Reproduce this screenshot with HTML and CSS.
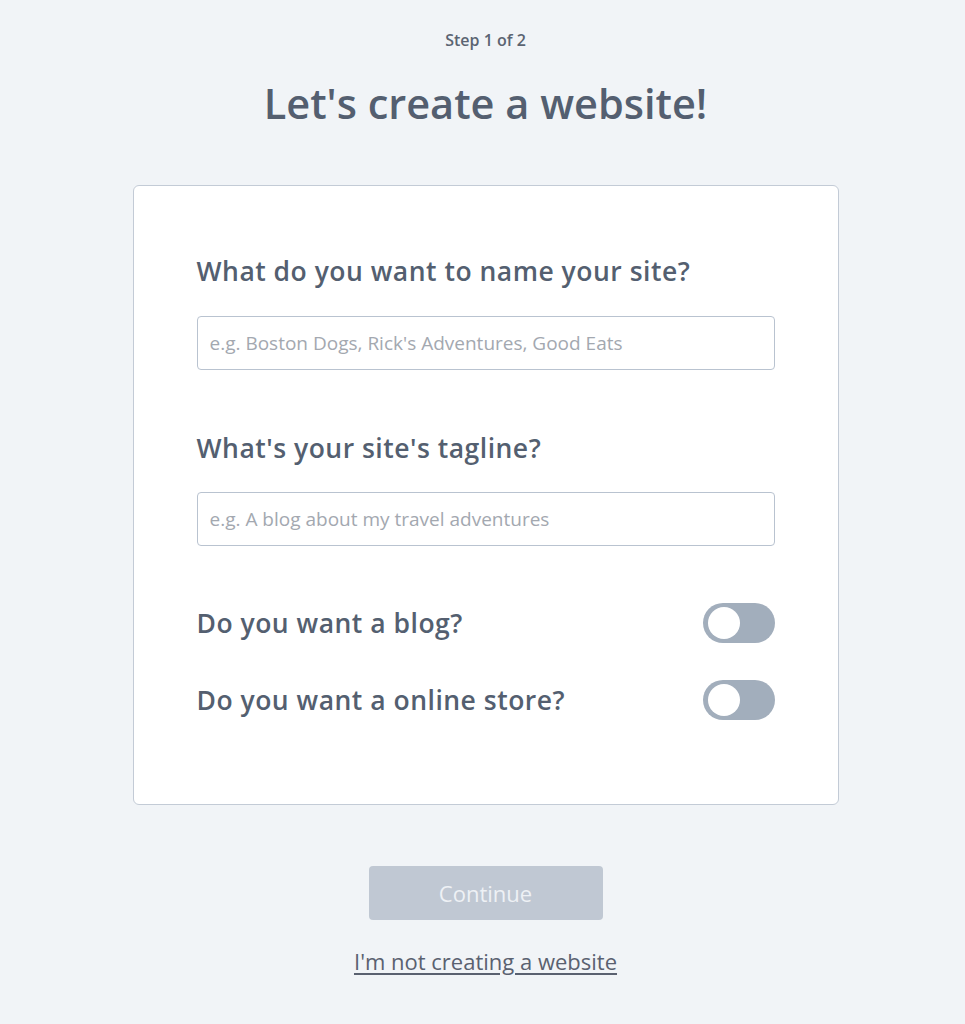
FILE: index.html
```html
<!DOCTYPE html>
<html lang="en">
<head>
<meta charset="utf-8">
<title>Let's create a website!</title>
<link rel="stylesheet" href="styles.css">
</head>
<body>
<main class="page">
  <p class="step">Step 1 of 2</p>
  <h1 class="title">Let's create a website!</h1>
  <form class="card">
    <label class="field">
      <span class="label">What do you want to name your site?</span>
      <input class="input" type="text" placeholder="e.g. Boston Dogs, Rick's Adventures, Good Eats">
    </label>
    <label class="field field-second">
      <span class="label">What's your site's tagline?</span>
      <input class="input" type="text" placeholder="e.g. A blog about my travel adventures">
    </label>
    <div class="toggle-row row-first">
      <span class="label">Do you want a blog?</span>
      <span class="toggle"><span class="knob"></span></span>
    </div>
    <div class="toggle-row row-second">
      <span class="label">Do you want a online store?</span>
      <span class="toggle"><span class="knob"></span></span>
    </div>
  </form>
  <button class="continue" type="button" disabled>Continue</button>
  <a class="skip" href="#">I'm not creating a website</a>
</main>
</body>
</html>
```
FILE: styles.css
```css
* { box-sizing: border-box; }
html, body { margin: 0; padding: 0; }
body {
  background: #f1f4f7;
  font-family: "Open Sans", "Liberation Sans", sans-serif;
  color: #545f70;
}
.page {
  display: flex;
  flex-direction: column;
  align-items: center;
  padding: 30px 0 0 6px;
  min-height: 1024px;
}
.step {
  margin: 0;
  font-size: 16px;
  line-height: 20px;
  font-weight: 600;
  color: #5b6472;
}
.title {
  margin: 27px 0 0;
  font-size: 41.5px;
  line-height: 52px;
  font-weight: 600;
  color: #545f70;
}
.card {
  margin-top: 56px;
  width: 706px;
  background: #fff;
  border: 1px solid #c3cbd6;
  border-radius: 6px;
  padding: 69px 63px 84px 63px;
  display: flex;
  flex-direction: column;
}
.field {
  display: flex;
  flex-direction: column;
  gap: 29px;
}
.field-second { margin-top: 62px; gap: 28px; }
.label {
  font-size: 26.5px;
  line-height: 32px;
  letter-spacing: 0.5px;
  font-weight: 600;
  color: #545f70;
}
.input {
  height: 54px;
  width: 100%;
  border: 1px solid #b9c3d0;
  border-radius: 4px;
  padding: 0 12px;
  font-family: inherit;
  font-size: 19px;
  color: #545f70;
  background: #fff;
}
.input::placeholder { color: #a3a8b0; }
.toggle-row {
  display: flex;
  align-items: center;
  justify-content: space-between;
  height: 40px;
}
.row-first { margin-top: 57px; }
.row-second { margin-top: 37px; }
.toggle {
  width: 72px;
  height: 40px;
  border-radius: 20px;
  background: #a2aebc;
  display: flex;
  align-items: center;
  padding-left: 5px;
}
.knob {
  width: 32px;
  height: 32px;
  border-radius: 50%;
  background: #fff;
}
.continue {
  margin-top: 61px;
  width: 234px;
  height: 54px;
  border: none;
  border-radius: 4px;
  background: #c0c8d3;
  color: #eef1f5;
  font-family: inherit;
  font-size: 22px;
}
.skip {
  margin-top: 26px;
  font-size: 22px;
  line-height: 30px;
  color: #5a6170;
  text-decoration: underline;
  text-underline-offset: 3px;
}
```
